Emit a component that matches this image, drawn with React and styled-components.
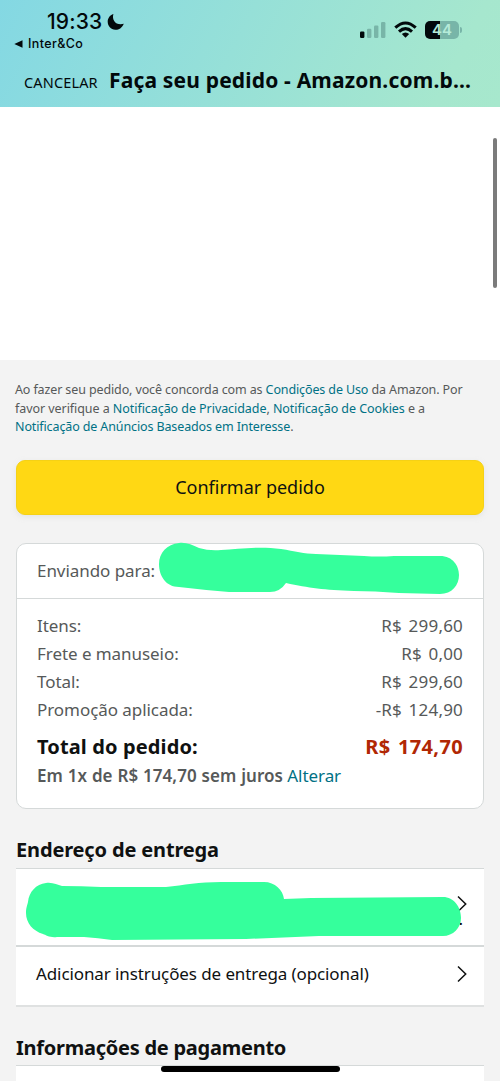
import styled, { createGlobalStyle } from 'styled-components';

const costs = [
  { label: 'Itens:', value: 'R$ 299,60' },
  { label: 'Frete e manuseio:', value: 'R$ 0,00' },
  { label: 'Total:', value: 'R$ 299,60' },
  { label: 'Promoção aplicada:', value: '-R$ 124,90' },
];

const Chevron = () => (
  <ChevronIcon viewBox="0 0 10 18">
    <path d="M1 1.5 L8.7 9 L1 16.5" fill="none" stroke="#0f1111" strokeWidth="1.5" />
  </ChevronIcon>
);

const StatusBar = () => (
  <Status>
    <StatusLeft>
      <Clock>
        19:33
        <svg width="18" height="18" viewBox="0 0 18 18">
          <path
            d="M6.4 0.9 C4.6 6.8 8.8 12.9 16.8 10.8 C14.8 15.4 11.6 17 8.3 16.8 C3.8 16.5 0.7 13.1 0.7 8.8 C0.7 5.3 2.8 2.1 6.4 0.9 Z"
            fill="#02090b"
          />
        </svg>
      </Clock>
      <BackApp>
        <svg width="9" height="8" viewBox="0 0 9 8">
          <path d="M0.3 4 L8.5 0.2 V7.8 Z" fill="#02090b" />
        </svg>
        Inter&amp;Co
      </BackApp>
    </StatusLeft>
    <StatusIcons>
      <svg width="27" height="18" viewBox="0 0 27 18">
        <rect x="1" y="10.4" width="4.4" height="6.6" rx="1.2" fill="#02090b" />
        <g fill="#78b5a8">
          <rect x="8" y="7.8" width="4.4" height="9.2" rx="1.2" />
          <rect x="15" y="4.5" width="4.4" height="12.5" rx="1.2" />
          <rect x="22" y="1" width="4.4" height="16" rx="1.2" />
        </g>
      </svg>
      <svg width="23" height="18" viewBox="0 0 23 18">
        <g fill="none" stroke="#02090b" strokeWidth="3">
          <path d="M1.3 6.7 Q11.5 -2.8 21.7 6.7" />
          <path d="M5 10.6 Q11.5 4.6 18 10.6" />
        </g>
        <path d="M7.8 13.1 Q11.5 9.8 15.2 13.1 L11.5 16.7 Z" fill="#02090b" />
      </svg>
      <BatteryWrap>
        <Battery>44</Battery>
        <BatteryTip />
      </BatteryWrap>
    </StatusIcons>
  </Status>
);

export default function App() {
  return (
    <Screen>
      <GlobalStyle />
      <Header>
        <StatusBar />
        <TitleBar>
          <Cancel>CANCELAR</Cancel>
          <Title>Faça seu pedido - Amazon.com.b...</Title>
        </TitleBar>
      </Header>
      <Blank>
        <ScrollThumb />
      </Blank>
      <Content>
        <Terms>
          <TermsLine $track="-0.12px">
            Ao fazer seu pedido, você concorda com as <Link>Condições de Uso</Link> da Amazon. Por
          </TermsLine>
          <TermsLine $track="-0.06px">
            favor verifique a <Link>Notificação de Privacidade</Link>, <Link>Notificação de Cookies</Link> e a
          </TermsLine>
          <TermsLine $track="-0.12px">
            <Link>Notificação de Anúncios Baseados em Interesse</Link>.
          </TermsLine>
        </Terms>
        <ConfirmButton>Confirmar pedido</ConfirmButton>

        <Summary>
          <ShipTo>
            Enviando para:
            <NameMask viewBox="0 0 302 54">
              <path
                d="M20 1 C27 0 33 3 40 6 Q50 9 62 8 C80 7 100 4 122 7 C136 9 145 12 157 12 L205 14 Q220 15 235 14 L281 14 C294 14 300 24 300 33 C300 43 293 52 281 52 L240 51 Q215 49 195 49 C165 48 150 46 127 41 Q121 50 111 50 L70 50 Q45 48 20 45 C7 45 0 34 0 22 C0 11 8 2 20 1 Z"
                fill="#35ff9c"
              />
            </NameMask>
          </ShipTo>
          <Costs>
            {costs.map((cost) => (
              <CostRow key={cost.label}>
                <span>{cost.label}</span>
                <CostValue>{cost.value}</CostValue>
              </CostRow>
            ))}
            <TotalRow>
              <TotalLabel>Total do pedido:</TotalLabel>
              <TotalPrice>R$ 174,70</TotalPrice>
            </TotalRow>
            <Installments>
              <strong>Em 1x de R$ 174,70 sem juros</strong> <Link>Alterar</Link>
            </Installments>
          </Costs>
        </Summary>

        <Heading>Endereço de entrega</Heading>
        <List>
          <AddressRow>
            <Chevron />
            <Period>.</Period>
            <AddressMask viewBox="0 0 436 60">
              <path
                d="M20 1 C27 0 31 3 36 4 Q55 4 75 5 L140 5 C158 3 173 0 195 0 L238 0 C249 0 257 8 258 17 L285 16 L417 15 C428 15 435 25 435 36 C435 46 427 54 417 54 L293 54 L220 57 L86 58 Q72 56 58 55 L31 55 C24 56 20 53 17 52 C7 49 0 41 0 31 C0 26 1 24 2 20 C3 10 10 2 20 1 Z"
                fill="#35ff9c"
              />
            </AddressMask>
          </AddressRow>
          <InstructionsRow>
            <span>Adicionar instruções de entrega (opcional)</span>
            <Chevron />
          </InstructionsRow>
        </List>

        <PaymentHeading>Informações de pagamento</PaymentHeading>
        <PaymentPanel>
          <HomeIndicator />
        </PaymentPanel>
      </Content>
    </Screen>
  );
}

const GlobalStyle = createGlobalStyle`
  * {
    box-sizing: border-box;
  }

  body {
    margin: 0;
    background: #f3f3f3;
    font-family: 'Noto Sans', 'Open Sans', sans-serif;
  }
`;

const Screen = styled.div`
  width: 500px;
  height: 1081px;
  overflow: hidden;
  display: flex;
  flex-direction: column;
`;

const Header = styled.header`
  height: 107px;
  flex: none;
  background: linear-gradient(117deg, #84d8e3 0%, #a6e7ce 88%, #a7e8cd 100%);
  color: #02090b;
`;

const Status = styled.div`
  height: 56px;
  display: flex;
  justify-content: space-between;
`;

const StatusLeft = styled.div`
  padding: 9px 0 0 14px;
`;

const Clock = styled.div`
  display: flex;
  align-items: center;
  gap: 5px;
  height: 25px;
  padding-left: 33px;
  font-family: Inter, sans-serif;
  font-size: 21px;
  font-weight: 500;
  letter-spacing: 0.15px;
`;

const BackApp = styled.div`
  display: flex;
  align-items: center;
  gap: 5px;
  height: 19px;
  font-family: Inter, sans-serif;
  font-size: 12.5px;
  font-weight: 500;
  letter-spacing: 0.4px;
`;

const StatusIcons = styled.div`
  display: flex;
  align-items: flex-start;
  gap: 8px;
  padding: 21px 38px 0 0;
`;

const BatteryWrap = styled.div`
  display: flex;
  align-items: center;
  gap: 1px;
`;

const Battery = styled.div`
  width: 34px;
  height: 18px;
  border-radius: 5px;
  background: linear-gradient(90deg, #02090b 44%, #78b5a8 44%);
  color: #b5ebd9;
  font-family: Inter, sans-serif;
  font-size: 15px;
  font-weight: 600;
  line-height: 18px;
  text-align: center;
`;

const BatteryTip = styled.div`
  width: 2px;
  height: 6px;
  border-radius: 0 2px 2px 0;
  background: #78b5a8;
`;

const TitleBar = styled.div`
  display: flex;
  align-items: baseline;
  gap: 10px;
  padding: 10px 0 0 24px;
  line-height: 28px;
  white-space: nowrap;
`;

const Cancel = styled.span`
  width: 75px;
  font-size: 14.5px;
  letter-spacing: 0.15px;
`;

const Title = styled.h1`
  margin: 0;
  font-size: 21px;
  font-weight: 700;
  letter-spacing: 0.17px;
`;

const Blank = styled.div`
  height: 253px;
  flex: none;
  display: flex;
  justify-content: flex-end;
  padding: 31px 3px 0 0;
  background: #fff;
`;

const ScrollThumb = styled.div`
  width: 4px;
  height: 150px;
  border-radius: 2px;
  background: #7b7b7b;
`;

const Content = styled.main`
  flex: 1;
  padding: 21px 16px 0;
  background: #f3f3f3;
`;

const Terms = styled.div`
  height: 79px;
  margin-left: -1px;
  color: #565959;
`;

const TermsLine = styled.p`
  margin: 0;
  font-size: 12.5px;
  line-height: 18.7px;
  letter-spacing: ${({ $track }) => $track};
  white-space: nowrap;
`;

const Link = styled.a`
  color: #007185;
`;

const ConfirmButton = styled.button`
  display: block;
  width: 468px;
  height: 55px;
  padding: 0 0 1px;
  border: 1px solid #f5d116;
  border-radius: 9px;
  background: #ffd814;
  box-shadow: 0 2px 5px rgba(213, 217, 217, 0.5);
  color: #0f1111;
  font-family: inherit;
  font-size: 18px;
  letter-spacing: 0;
`;

const Summary = styled.section`
  height: 266px;
  margin-top: 28px;
  border: 1px solid #d5d9d9;
  border-radius: 10px;
  background: #fff;
  color: #565959;
  font-size: 17px;
  letter-spacing: -0.06px;
`;

const ShipTo = styled.div`
  position: relative;
  height: 55px;
  padding-left: 20px;
  border-bottom: 1px solid #d5d9d9;
  line-height: 54px;
`;

const NameMask = styled.svg`
  position: absolute;
  left: 142px;
  top: -2px;
  width: 302px;
  height: 54px;
`;

const Costs = styled.div`
  padding: 13px 20px 0;
`;

const CostRow = styled.div`
  display: flex;
  justify-content: space-between;
  line-height: 28px;
`;

const CostValue = styled.span`
  letter-spacing: 0.2px;
  word-spacing: 2px;
`;

const TotalRow = styled.div`
  display: flex;
  justify-content: space-between;
  margin-top: 8px;
  font-size: 20px;
  font-weight: 700;
  line-height: 30px;
`;

const TotalLabel = styled.span`
  color: #0f1111;
  letter-spacing: 0.13px;
`;

const TotalPrice = styled.span`
  color: #b12704;
  letter-spacing: 0.35px;
  word-spacing: 2px;
`;

const Installments = styled.div`
  line-height: 28px;
  white-space: nowrap;

  strong {
    font-weight: 600;
    letter-spacing: 0.04px;
    word-spacing: 0.4px;
  }
`;

const Heading = styled.h2`
  margin: 0;
  padding-top: 27px;
  height: 59px;
  color: #0f1111;
  font-size: 20px;
  font-weight: 700;
  line-height: 27px;
  letter-spacing: -0.15px;
`;

const List = styled.div`
  border-top: 1px solid #d5d9d9;
  border-bottom: 2px solid #dfe1e1;
  background: #fff;
`;

const AddressRow = styled.div`
  position: relative;
  display: flex;
  justify-content: flex-end;
  height: 78px;
  padding: 26px 17px 0 0;
  border-bottom: 2px solid #d5d9d9;
`;

const Period = styled.span`
  position: absolute;
  right: 21px;
  top: 40px;
  font-size: 17px;
  line-height: 20px;
`;

const AddressMask = styled.svg`
  position: absolute;
  left: 10px;
  top: 13px;
  width: 436px;
  height: 60px;
`;

const InstructionsRow = styled.div`
  display: flex;
  align-items: center;
  justify-content: space-between;
  height: 58px;
  padding: 0 17px 5px 20px;
  color: #0f1111;
  font-size: 17px;
  letter-spacing: -0.1px;
`;

const ChevronIcon = styled.svg`
  width: 10px;
  height: 18px;
  flex: none;
`;

const PaymentHeading = styled(Heading)`
  height: 58px;
  letter-spacing: -0.25px;
`;

const PaymentPanel = styled.div`
  display: flex;
  justify-content: center;
  height: 20px;
  border-top: 1px solid #d5d9d9;
  background: #fff;
`;

const HomeIndicator = styled.div`
  width: 179px;
  height: 6px;
  border-radius: 3px;
  background: #000;
`;
